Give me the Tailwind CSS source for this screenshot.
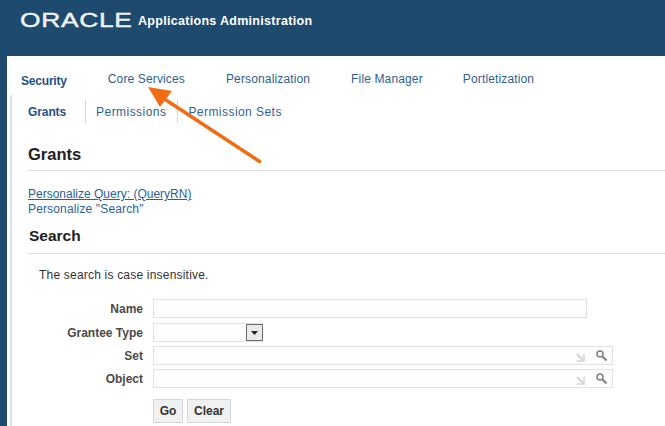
<!DOCTYPE html>
<html lang="en">
  <head>
    <meta charset="UTF-8" />
    <title>Applications Administration</title>
    <script src="https://cdn.jsdelivr.net/npm/@tailwindcss/browser@4"></script>
  </head>
  <body class="relative h-[426px] w-[665px] overflow-hidden bg-white font-['Liberation_Sans',Arial,sans-serif] text-[12px]">
    <!-- Header -->
    <div class="flex h-14 items-start bg-[#1e4a6e] pl-5 pt-[7px] text-white">
      <span class="w-[118px] origin-left scale-x-[1.32] text-[20px] leading-[26px] tracking-[0.5px] text-[#f2f5f8] [-webkit-text-stroke:0.4px_#f2f5f8]">ORACLE</span>
      <span class="pt-[2px] text-[12.5px] leading-[24px] font-bold tracking-[0.3px]">Applications Administration</span>
    </div>

    <div class="flex h-[370px]">
      <div class="w-[7px] shrink-0 bg-[#1e4a6e]"></div>
      <div class="min-w-0 flex-1">
        <!-- Main tabs -->
        <div class="flex h-[39px] text-[#2e5f96] tracking-[0.14px]">
          <a class="ml-[14px] mt-[16px] font-bold text-[#1f5288] tracking-[-0.2px]">Security</a>
          <a class="ml-[41px] mt-[14px]">Core Services</a>
          <a class="ml-[41px] mt-[14px]">Personalization</a>
          <a class="ml-[41px] mt-[14px]">File Manager</a>
          <a class="ml-[40px] mt-[14px]">Portletization</a>
        </div>

        <div class="ml-[3px] h-[331px] border-l-2 border-[#dfe1e3]">
          <!-- Sub tabs -->
          <div class="flex h-[28px] items-center pl-[16px] pt-[5px] text-[#2e5f96] tracking-[0.45px]">
            <a class="font-bold text-[#1f5288] tracking-[-0.1px]">Grants</a>
            <span class="ml-[19px] h-[23px] w-px bg-[#d4d6d8]"></span>
            <a class="ml-[10px]">Permissions</a>
            <span class="ml-[11px] h-[23px] w-px bg-[#d4d6d8]"></span>
            <a class="ml-[10px]">Permission Sets</a>
          </div>

          <!-- Page title -->
          <div class="ml-[16px] mt-[21px] h-[27px] border-b border-[#dcdcdc] text-[16.5px] leading-[20px] font-bold text-[#222222]">Grants</div>

          <div class="ml-[16px] mt-[16px] leading-[15px] text-[#2a5f9c]">
            <a class="block underline">Personalize Query: (QueryRN)</a>
            <a class="block tracking-[0.15px]">Personalize "Search"</a>
          </div>

          <!-- Search -->
          <div class="ml-[16px] mt-[9px] h-[28px] border-b border-[#dcdcdc] pl-px text-[15.5px] leading-[20px] font-bold text-[#222222]">Search</div>
          <p class="ml-[27px] mt-[14px] leading-[15px] text-[#333333] tracking-[0.2px]">The search is case insensitive.</p>

          <div class="ml-[16px] mt-[16px] grid grid-cols-[115px_1fr] gap-x-[10px] font-bold text-[#4a4a4a]">
            <label class="flex h-[18px] items-center justify-end pt-[2px]">Name</label>
            <div class="h-[19px] w-[434px] border border-[#dfe1e2] bg-[#fcfdfe]"></div>

            <label class="mt-[5px] flex h-[18px] items-center justify-end pt-[2px]">Grantee Type</label>
            <div class="mt-[5px] flex h-[19px] w-[110px] justify-end border border-[#dfe1e2] bg-[#fcfdfe]">
              <span class="-mr-px flex h-[17px] w-[17px] items-center justify-center border border-[#6b6f73] bg-[#e8eaec]">
                <svg width="7" height="4" viewBox="0 0 7 4"><path d="M0 0h7L3.500 4z" fill="#222" /></svg>
              </span>
            </div>

            <label class="mt-[4px] flex h-[18px] items-center justify-end pt-[2px]">Set</label>
            <div class="mt-[4px] flex h-[19px] w-[460px] items-center justify-end gap-[11px] border border-[#dfe1e2] bg-[#fcfdfe] pr-[4px]">
              <svg class="mt-[4px]" width="9" height="9" viewBox="0 0 9 9" fill="none" stroke="#d2d4d6" stroke-width="2"><path d="M1 1l6 6" /><path d="M8 1v7H1" stroke-width="1.500" /></svg>
              <svg class="mr-[1px] mb-[1px]" width="11" height="11" viewBox="0 0 11 11" fill="none" stroke="#7d8287"><circle cx="4" cy="4" r="3" stroke-width="1.500" /><path d="M6.500 6.500l4 4" stroke-width="2" /></svg>
            </div>

            <label class="mt-[4px] flex h-[18px] items-center justify-end pt-[2px]">Object</label>
            <div class="mt-[4px] flex h-[19px] w-[460px] items-center justify-end gap-[11px] border border-[#dfe1e2] bg-[#fcfdfe] pr-[4px]">
              <svg class="mt-[4px]" width="9" height="9" viewBox="0 0 9 9" fill="none" stroke="#d2d4d6" stroke-width="2"><path d="M1 1l6 6" /><path d="M8 1v7H1" stroke-width="1.500" /></svg>
              <svg class="mr-[1px] mb-[1px]" width="11" height="11" viewBox="0 0 11 11" fill="none" stroke="#7d8287"><circle cx="4" cy="4" r="3" stroke-width="1.500" /><path d="M6.500 6.500l4 4" stroke-width="2" /></svg>
            </div>

            <div></div>
            <div class="mt-[11px] flex gap-[4px] text-[#333333]">
              <button class="h-[24px] w-[30px] border border-[#d4d6d8] bg-[#f0f1f2] font-bold">Go</button>
              <button class="h-[24px] w-[44px] border border-[#d4d6d8] bg-[#f0f1f2] font-bold">Clear</button>
            </div>
          </div>
        </div>
      </div>
    </div>

    <!-- Annotation arrow -->
    <svg class="absolute top-0 left-0" width="665" height="426" fill="none">
      <path d="M259.500 161.500L166 100" stroke="#f26c13" stroke-width="3.500" stroke-linecap="round" />
      <path d="M148 87L172 91L160 107Z" fill="#f26c13" />
    </svg>
  </body>
</html>
